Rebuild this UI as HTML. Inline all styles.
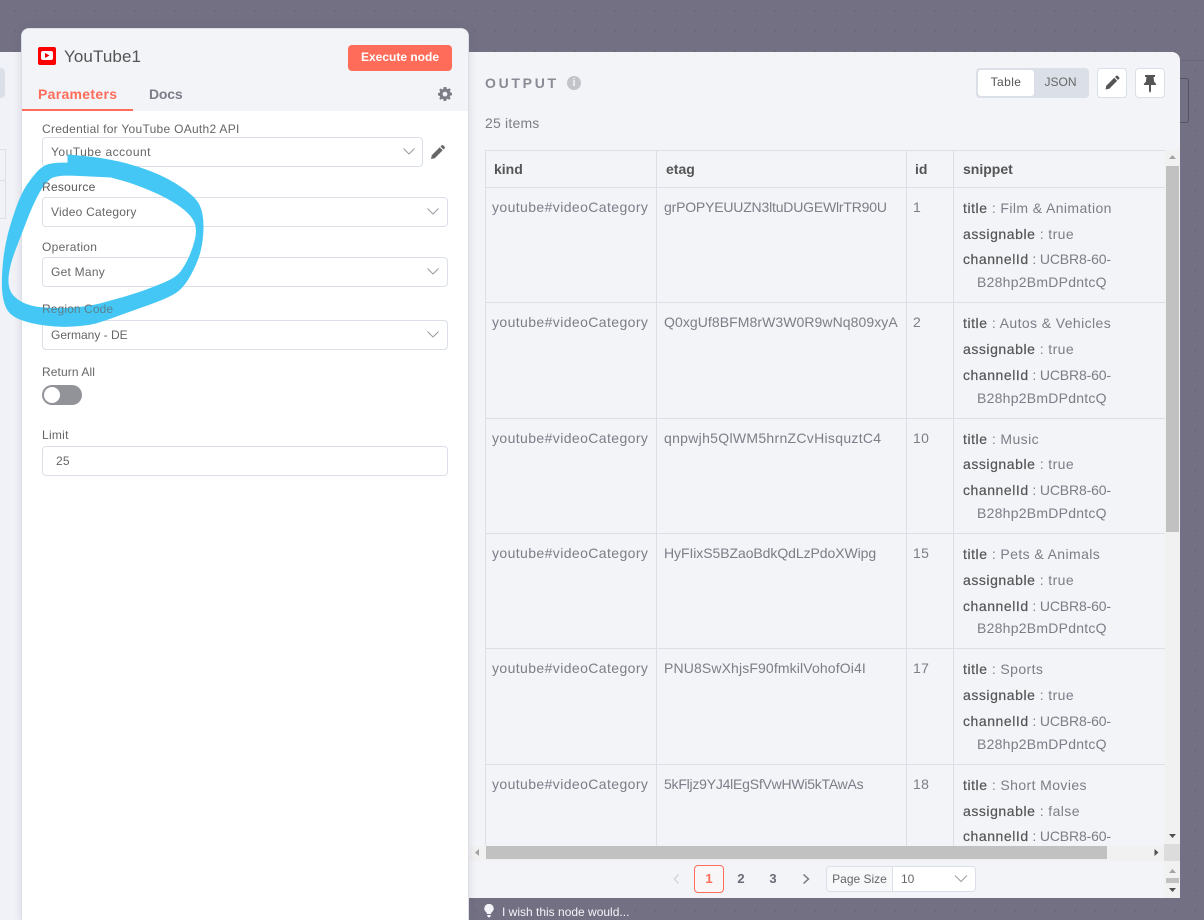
<!DOCTYPE html>
<html><head><meta charset="utf-8"><style>
*{box-sizing:border-box}
html,body{margin:0;padding:0}
body{width:1204px;height:920px;position:relative;overflow:hidden;background-color:#737083;background-image:radial-gradient(circle at 15px 11px,#6b6979 0,#6b6979 .8px,transparent 1.200px);background-size:20px 20px;font-family:"Liberation Sans",sans-serif;color:#555}
.a{position:absolute;white-space:nowrap}
.lb{position:absolute;left:42px;font-size:12px;line-height:16px;color:#666;white-space:nowrap;letter-spacing:.28px}
.in{position:absolute;left:42px;width:406px;height:30px;background:#fff;border:1px solid #dbdfe7;border-radius:4px;font-size:12px;line-height:28px;padding-left:8px;color:#666;white-space:nowrap;letter-spacing:.2px}
.c{position:absolute;font-size:14px;line-height:20px;color:#7d7d87;white-space:nowrap;letter-spacing:.4px}
.u{letter-spacing:-.15px}
.b{letter-spacing:.25px}
.k{color:#555;letter-spacing:.55px;-webkit-text-stroke:.2px #555}
.hl{position:absolute;left:486px;width:679px;height:1px;background:#dbdfe7}
.vl{position:absolute;top:150px;height:696px;width:1px;background:#dbdfe7}
.th{position:absolute;top:160px;font-size:14px;line-height:18px;font-weight:700;color:#555}
svg{position:absolute;overflow:visible}
</style></head><body>

<div class="a" style="left:0;top:52px;width:30px;height:868px;background:#f1f2f7"></div>
<div class="a" style="left:0;top:68px;width:5px;height:30px;background:#dbe0e8;border-radius:0 4px 4px 0"></div>
<div class="a" style="left:0;top:149px;width:6px;height:70px;border:1px solid #dbdfe7;border-left:0"></div>
<div class="a" style="left:0;top:180px;width:6px;height:1px;background:#dbdfe7"></div>

<div class="a" style="left:1180px;top:60px;width:24px;height:1px;background:#6a6878"></div>
<div class="a" style="left:1180px;top:78px;width:9px;height:45px;border:1px solid #55535f;border-left:0;border-radius:0 3px 3px 0"></div>

<!-- output panel -->
<div class="a" style="left:460px;top:52px;width:720px;height:846px;background:#f2f4f8;border-radius:0 8px 0 0"></div>
<div class="a" style="left:485px;top:75px;font-size:14px;line-height:16px;font-weight:700;letter-spacing:2.700px;color:#8a8a94">OUTPUT</div>
<div class="a" style="left:567px;top:76px;width:14px;height:14px;border-radius:50%;background:#c3c4c9;color:#f2f4f8;font-size:11px;line-height:14px;text-align:center;font-weight:700">i</div>

<div class="a" style="left:976px;top:68px;width:113px;height:30px;background:#dbdfe7;border-radius:4px"></div>
<div class="a" style="left:978px;top:70px;width:56px;height:26px;background:#fff;border-radius:3px;font-size:12px;line-height:25px;text-align:center;color:#555;letter-spacing:.4px">Table</div>
<div class="a" style="left:1034px;top:70px;width:53px;height:26px;font-size:12px;line-height:25px;text-align:center;color:#666">JSON</div>

<div class="a" style="left:1097px;top:68px;width:30px;height:30px;background:#fff;border:1px solid #dbdfe7;border-radius:4px"></div>
<svg style="left:1104px;top:75px" width="16" height="16" viewBox="0 0 16 16"><path d="M1.500 14.500l.8-3.800L10.200 2.800l3 3-7.900 7.900z" fill="#555"/><path d="M11 2l1.200-1.200a1 1 0 0 1 1.400 0l1.600 1.600a1 1 0 0 1 0 1.400L14 5z" fill="#555"/></svg>
<div class="a" style="left:1135px;top:68px;width:30px;height:30px;background:#fff;border:1px solid #dbdfe7;border-radius:4px"></div>
<svg style="left:1143px;top:75px" width="14" height="18" viewBox="0 0 14 18"><path d="M2 0h10v2h-1.500l.7 5c1.200.6 2 1.700 2 3H8v6l-1 2-1-2v-6H.8c0-1.300.8-2.400 2-3l.7-5H2z" fill="#555"/></svg>

<div class="a" style="left:485px;top:115px;font-size:14px;line-height:16px;color:#7d7d87;letter-spacing:.2px">25 items</div>

<!-- table -->
<div class="hl" style="top:150px"></div>
<div class="hl" style="top:187px"></div>
<div class="hl" style="top:302px"></div>
<div class="hl" style="top:418px"></div>
<div class="hl" style="top:533px"></div>
<div class="hl" style="top:648px"></div>
<div class="hl" style="top:764px"></div>
<div class="vl" style="left:485px"></div>
<div class="vl" style="left:656px"></div>
<div class="vl" style="left:906px"></div>
<div class="vl" style="left:953px"></div>

<div class="th" style="left:494px">kind</div>
<div class="th" style="left:666px">etag</div>
<div class="th" style="left:915px">id</div>
<div class="th" style="left:963px">snippet</div>

<div class="c" style="left:492px;top:197px">youtube#videoCategory</div>
<div class="c" style="left:664px;top:197px;letter-spacing:-.19px">grPOPYEUUZN3ltuDUGEWlrTR90U</div>
<div class="c" style="left:913px;top:197px">1</div>
<div class="c" style="left:963px;top:198px"><span class="k">title</span> : Film &amp; Animation</div>
<div class="c" style="left:963px;top:224px"><span class="k">assignable</span> : true</div>
<div class="c u" style="left:963px;top:249px"><span class="k">channelId</span> : UCBR8-60-</div>
<div class="c b" style="left:977px;top:272px">B28hp2BmDPdntcQ</div>

<div class="c" style="left:492px;top:312px">youtube#videoCategory</div>
<div class="c" style="left:664px;top:312px;letter-spacing:.07px">Q0xgUf8BFM8rW3W0R9wNq809xyA</div>
<div class="c" style="left:913px;top:312px">2</div>
<div class="c" style="left:963px;top:313px"><span class="k">title</span> : Autos &amp; Vehicles</div>
<div class="c" style="left:963px;top:339px"><span class="k">assignable</span> : true</div>
<div class="c u" style="left:963px;top:365px"><span class="k">channelId</span> : UCBR8-60-</div>
<div class="c b" style="left:977px;top:388px">B28hp2BmDPdntcQ</div>

<div class="c" style="left:492px;top:428px">youtube#videoCategory</div>
<div class="c" style="left:664px;top:428px;letter-spacing:.3px">qnpwjh5QlWM5hrnZCvHisquztC4</div>
<div class="c" style="left:913px;top:428px">10</div>
<div class="c" style="left:963px;top:429px"><span class="k">title</span> : Music</div>
<div class="c" style="left:963px;top:454px"><span class="k">assignable</span> : true</div>
<div class="c u" style="left:963px;top:480px"><span class="k">channelId</span> : UCBR8-60-</div>
<div class="c b" style="left:977px;top:503px">B28hp2BmDPdntcQ</div>

<div class="c" style="left:492px;top:543px">youtube#videoCategory</div>
<div class="c" style="left:664px;top:543px;letter-spacing:-.07px">HyFIixS5BZaoBdkQdLzPdoXWipg</div>
<div class="c" style="left:913px;top:543px">15</div>
<div class="c" style="left:963px;top:544px"><span class="k">title</span> : Pets &amp; Animals</div>
<div class="c" style="left:963px;top:570px"><span class="k">assignable</span> : true</div>
<div class="c u" style="left:963px;top:596px"><span class="k">channelId</span> : UCBR8-60-</div>
<div class="c b" style="left:977px;top:618px">B28hp2BmDPdntcQ</div>

<div class="c" style="left:492px;top:658px">youtube#videoCategory</div>
<div class="c" style="left:664px;top:658px;letter-spacing:.13px">PNU8SwXhjsF90fmkilVohofOi4I</div>
<div class="c" style="left:913px;top:658px">17</div>
<div class="c" style="left:963px;top:659px"><span class="k">title</span> : Sports</div>
<div class="c" style="left:963px;top:685px"><span class="k">assignable</span> : true</div>
<div class="c u" style="left:963px;top:711px"><span class="k">channelId</span> : UCBR8-60-</div>
<div class="c b" style="left:977px;top:734px">B28hp2BmDPdntcQ</div>

<div class="c" style="left:492px;top:774px">youtube#videoCategory</div>
<div class="c" style="left:664px;top:774px;letter-spacing:-.23px">5kFljz9YJ4lEgSfVwHWi5kTAwAs</div>
<div class="c" style="left:913px;top:774px">18</div>
<div class="c" style="left:963px;top:775px"><span class="k">title</span> : Short Movies</div>
<div class="c" style="left:963px;top:801px"><span class="k">assignable</span> : false</div>
<div class="c u" style="left:963px;top:826px;height:20px;overflow:hidden"><span class="k">channelId</span> : UCBR8-60-</div>

<!-- scrollbars -->
<div class="a" style="left:1165px;top:150px;width:15px;height:696px;background:#f1f1f1"></div>
<div class="a" style="left:1166px;top:166px;width:13px;height:366px;background:#c1c1c1"></div>
<svg style="left:1165px;top:150px" width="15" height="15"><path d="M7.500 5l3.500 4H4z" fill="#a3a3a3"/></svg>
<svg style="left:1165px;top:828px" width="15" height="15"><path d="M7.500 10L4 6h7z" fill="#505050"/></svg>
<div class="a" style="left:470px;top:846px;width:695px;height:15px;background:#f1f1f1"></div>
<div class="a" style="left:486px;top:846px;width:621px;height:13px;background:#c1c1c1"></div>
<div class="a" style="left:1164px;top:844px;width:16px;height:17px;background:#dcdcdc"></div>
<div class="a" style="left:1164px;top:861px;width:16px;height:37px;background:#f1f1f1"></div>
<svg style="left:470px;top:846px" width="15" height="15"><path d="M5 6.500l4-3.500v7z" fill="#a3a3a3"/></svg>
<svg style="left:1149px;top:846px" width="15" height="15"><path d="M9.500 6.500l-4-3.500v7z" fill="#505050"/></svg>

<!-- pagination -->
<svg style="left:670px;top:872px" width="14" height="14"><path d="M8.500 2.500L4.500 7l4 4.500" fill="none" stroke="#d5d6dc" stroke-width="1.500"/></svg>
<div class="a" style="left:694px;top:865px;width:30px;height:28px;border:1px solid #ff6d5a;border-radius:4px;background:#f8f6f7;color:#ff6d5a;font-size:13px;font-weight:700;line-height:26px;text-align:center">1</div>
<div class="a" style="left:726px;top:865px;width:30px;height:28px;color:#6b6b75;font-size:13px;font-weight:700;line-height:27px;text-align:center">2</div>
<div class="a" style="left:758px;top:865px;width:30px;height:28px;color:#6b6b75;font-size:13px;font-weight:700;line-height:27px;text-align:center">3</div>
<svg style="left:799px;top:872px" width="14" height="14"><path d="M4.500 2.500L9.500 7l-5 4.500" fill="none" stroke="#77777f" stroke-width="1.500"/></svg>
<div class="a" style="left:826px;top:866px;width:150px;height:26px;background:#fff;border:1px solid #dbdfe7;border-radius:4px"></div>
<div class="a" style="left:827px;top:867px;width:66px;height:24px;background:#f7f8fa;border-right:1px solid #dbdfe7;border-radius:3px 0 0 3px;font-size:12px;line-height:24px;text-align:center;color:#666">Page Size</div>
<div class="a" style="left:901px;top:867px;font-size:12px;line-height:24px;color:#666">10</div>
<svg style="left:954px;top:873px" width="14" height="12"><path d="M1 2.500l6 6 6-6" fill="none" stroke="#9b9ba3" stroke-width="1"/></svg>
<svg style="left:1165px;top:866px" width="15" height="12"><path d="M7.500 3l3.500 4H4z" fill="#a3a3a3"/></svg>
<div class="a" style="left:1166px;top:878px;width:13px;height:5px;background:#c1c1c1"></div>
<svg style="left:1165px;top:884px" width="15" height="10"><path d="M7.500 8L4 4h7z" fill="#505050"/></svg>

<!-- feedback -->
<svg style="left:484px;top:904px" width="10" height="14" viewBox="0 0 10 14"><path d="M5 0a4.500 4.500 0 0 0-3 8c.6.600 1 1.300 1 2h4c0-.7.400-1.400 1-2a4.500 4.500 0 0 0-3-8zM3.200 11h3.600v1L5.500 13.500h-1L3.200 12z" fill="#f2f4f8"/></svg>
<div class="a" style="left:502px;top:904px;font-size:12px;line-height:16px;color:#f2f4f8">I wish this node would...</div>

<!-- parameters panel -->
<div class="a" style="left:21px;top:28px;width:448px;height:892px;background:#fff;border:1px solid #dbdfe7;border-bottom:0;border-radius:8px 8px 0 0;box-shadow:0 0 8px rgba(90,90,110,.18)"></div>
<div class="a" style="left:22px;top:29px;width:446px;height:82px;background:#f2f4f8;border-radius:7px 7px 0 0"></div>

<div class="a" style="left:38px;top:47px;width:18px;height:18px;background:#f00;border-radius:2px"></div>
<div class="a" style="left:41px;top:51px;width:12px;height:9px;background:#fff;border-radius:2px"></div>
<svg style="left:45px;top:53px" width="5" height="5"><path d="M0 0l4.500 2.500L0 5z" fill="#e00"/></svg>
<div class="a" style="left:64px;top:46px;font-size:17px;line-height:22px;color:#555;letter-spacing:.1px">YouTube1</div>

<div class="a" style="left:348px;top:45px;width:104px;height:26px;background:#ff6d5a;border-radius:4px;color:#fff;font-size:12px;font-weight:700;line-height:25px;text-align:center">Execute node</div>

<div class="a" style="left:38px;top:85px;font-size:14px;line-height:18px;color:#ff6d5a;font-weight:700;letter-spacing:.3px">Parameters</div>
<div class="a" style="left:22px;top:109px;width:111px;height:2px;background:#ff6d5a"></div>
<div class="a" style="left:149px;top:85px;font-size:14px;line-height:18px;color:#7d7d87;font-weight:700;letter-spacing:-.2px">Docs</div>
<svg style="left:438px;top:87px" width="14" height="14" viewBox="0 0 14 14"><path fill-rule="evenodd" d="M5.700 0h2.600l.4 1.800 1.100.5L11.400 1.300l1.400 1.400-1 1.600.500 1.100 1.700.4v2.400l-1.800.4-.5 1.100 1 1.600-1.400 1.500-1.600-1-1.100.5-.4 1.700H5.700l-.4-1.700-1.100-.5-1.600 1L1.200 11.700l1-1.600-.5-1.100L0 8.400V6l1.700-.4.500-1.100-1-1.600 1.400-1.400 1.600 1 1.100-.5zM7 4.700a2.400 2.400 0 1 0 0 4.800 2.400 2.400 0 0 0 0-4.800z" fill="#7d7d87"/></svg>

<div class="lb" style="top:121px">Credential for YouTube OAuth2 API</div>
<div class="in" style="top:137px;width:381px;letter-spacing:.5px">YouTube account</div>
<svg style="left:402px;top:147px" width="14" height="10"><path d="M1.500 1.500l5.500 5.500 5.500-5.500" fill="none" stroke="#9b9ba3"/></svg>
<svg style="left:430px;top:144px" width="16" height="16" viewBox="0 0 16 16"><path d="M1 15l.8-3.800L9.700 3.300l3 3-7.900 7.900z" fill="#666"/><path d="M10.500 2.500l1.200-1.200a1 1 0 0 1 1.400 0l1.600 1.600a1 1 0 0 1 0 1.400l-1.200 1.200z" fill="#666"/></svg>

<div class="lb" style="top:179px">Resource</div>
<div class="in" style="top:197px;letter-spacing:.22px">Video Category</div>
<svg style="left:426px;top:207px" width="14" height="10"><path d="M1.500 1.500l5.500 5.500 5.500-5.500" fill="none" stroke="#9b9ba3"/></svg>

<div class="lb" style="top:239px">Operation</div>
<div class="in" style="top:257px;letter-spacing:.25px">Get Many</div>
<svg style="left:426px;top:267px" width="14" height="10"><path d="M1.500 1.500l5.500 5.500 5.500-5.500" fill="none" stroke="#9b9ba3"/></svg>

<div class="lb" style="top:301px;letter-spacing:.1px">Region Code</div>
<div class="in" style="top:320px;letter-spacing:0">Germany - DE</div>
<svg style="left:426px;top:330px" width="14" height="10"><path d="M1.500 1.500l5.500 5.500 5.500-5.500" fill="none" stroke="#9b9ba3"/></svg>

<div class="lb" style="top:364px;letter-spacing:.1px">Return All</div>
<div class="a" style="left:42px;top:385px;width:40px;height:20px;border-radius:10px;background:#929399"></div>
<div class="a" style="left:44px;top:387px;width:16px;height:16px;border-radius:50%;background:#fff"></div>

<div class="lb" style="top:427px">Limit</div>
<div class="in" style="top:446px;padding-left:13px">25</div>

<!-- hand-drawn highlight -->
<svg style="left:0;top:0" width="220" height="340" viewBox="0 0 220 340"><path fill="#44c7f4" stroke="#44c7f4" stroke-width="1" fill-rule="evenodd" d="M68 155L84 156.500Q100 158 116.500 161.500Q133 165 150 171.500Q167 178 181 187.500Q195 197 199 205Q203 213 203 226.500Q203 240 200 251.500Q197 263 190 275.500Q183 288 175 293Q167 298 150 304Q133 310 116.500 316Q100 322 93.500 323.500Q87 325 73.500 326Q60 327 45 325Q30 323 20 319Q10 315 6.500 307.500Q3 300 2.500 288.500Q2 277 3.500 262Q5 247 8.500 233.500Q12 220 17 206.500Q22 193 27 185.500Q32 178 37.500 172Q43 166 49 164.500Q55 163 68 163ZM111 177L80 175.500Q57 174 51 178Q45 182 39 192.500Q33 203 26.500 220Q20 237 15 250Q10 263 8.500 273Q7 283 9.500 290Q12 297 21 302Q30 307 45 308Q60 309 73.500 308Q87 307 100 304L116 299.500Q133 295 146.500 290Q160 285 167.500 281.500Q175 278 179 274Q183 270 188 260Q193 250 195.500 239Q198 228 194 220.500Q190 213 178.500 205Q167 197 150 190Q133 183 122 180Z"/></svg>
<div class="lb" style="top:179px;opacity:.7">Resource</div>
<div class="lb" style="top:301px;opacity:.7;letter-spacing:.1px">Region Code</div>
</body></html>
